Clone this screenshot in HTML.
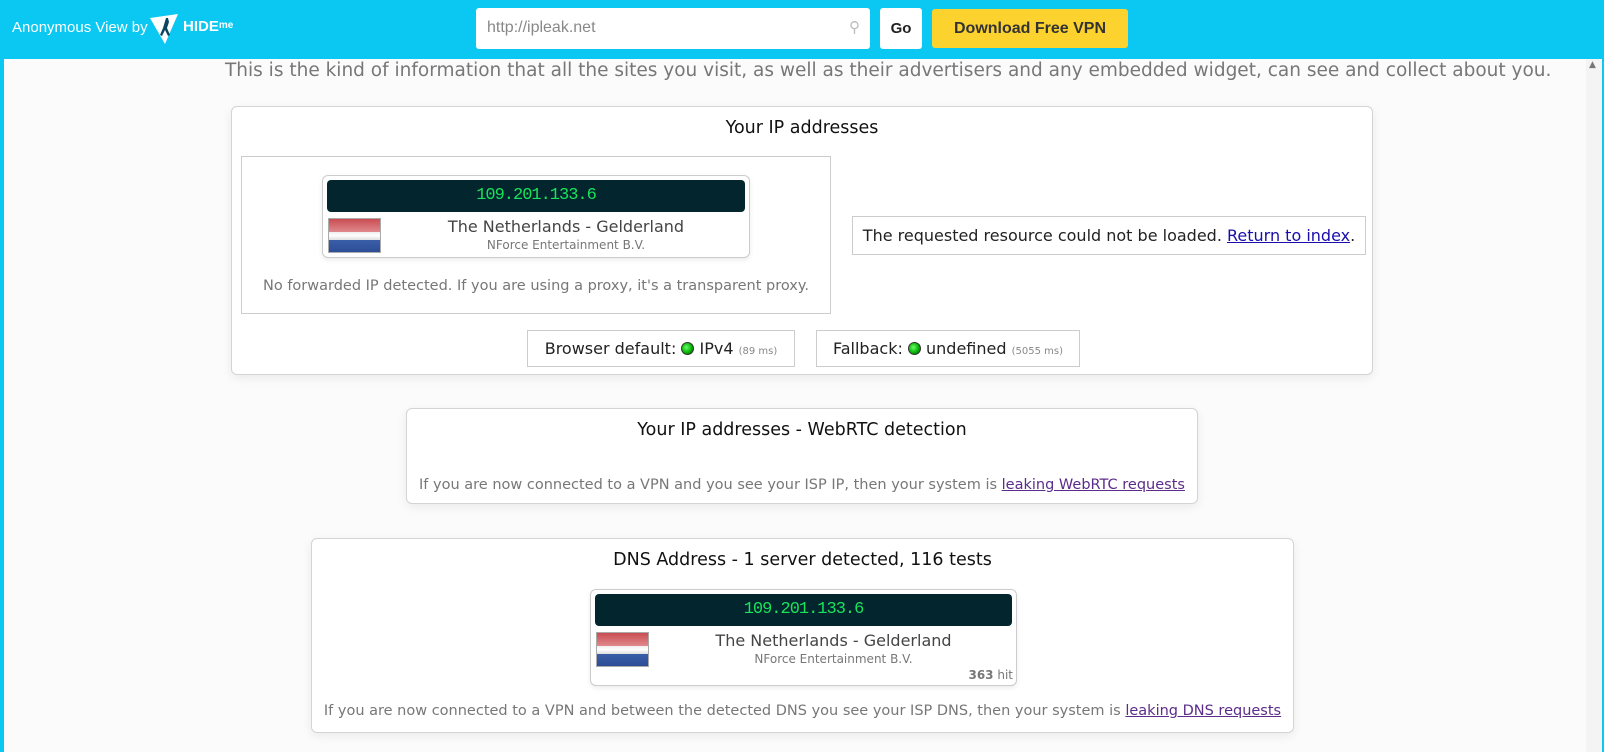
<!DOCTYPE html>
<html><head><style>
*{box-sizing:border-box;margin:0;padding:0}
body{width:1604px;height:752px;overflow:hidden;background:#0bc8f2;font-family:"DejaVu Sans",sans-serif;position:relative}
.abs{position:absolute}
#main{left:4px;top:59px;width:1598px;height:693px;background:#fbfbfb}
.card{position:absolute;background:#fff;border:1px solid #d4d4d4;border-radius:6px;box-shadow:0 3px 10px rgba(0,0,0,.07)}
.t{position:absolute;left:0;right:0;text-align:center;font-size:17.5px;color:#111}
.box{position:absolute;border:1px solid #ccc;background:#fff}
.ipw{position:absolute;border:1px solid #ccc;border-radius:6px;background:#fff;box-shadow:0 2px 5px rgba(0,0,0,.08)}
.ipbar{position:absolute;left:4px;right:4px;top:4px;height:32px;background:#03262e;border-radius:4px;color:#19e35a;font-family:"Liberation Mono",monospace;font-size:17px;text-align:center;line-height:32px;letter-spacing:-1px}
.flag{position:absolute;left:5px;top:42px;width:53px;height:35px;background:linear-gradient(#c94d52,#e08a8d 40%,#eee 38%,#fff 50%,#ddd 64%,#3a5ea8 64%,#2d4e96);border:1px solid #aaa}
.loc{position:absolute;left:60px;right:0;text-align:center;font-size:16px;color:#444}
.isp{position:absolute;left:60px;right:0;text-align:center;font-size:12px;color:#777}
.dot{display:inline-block;width:13px;height:13px;border-radius:50%;background:radial-gradient(circle at 40% 40%,#6f6,#0a0 60%,#050);border:1px solid #333;vertical-align:-1px}
.small{font-size:10px;color:#888}
.g{color:#777;font-size:14.5px}
a{color:#5b2c8a;text-decoration:underline}
</style></head><body>
<div class="abs" style="left:12px;top:19px;color:#fff;font-family:'Liberation Sans',sans-serif;font-size:15px">Anonymous View by</div>
<svg class="abs" style="left:149px;top:13px" width="30" height="32" viewBox="0 0 30 32"><path d="M1 5 L29 1 L16 31 Z" fill="#fff"/><path d="M17 5 l2 0 l1 4 l-2 6 l3 7 l-2 1 l-3-6 l-3 6 l-2-1 l3-7 z" fill="#0b4660"/></svg>
<div class="abs" style="left:183px;top:18px;color:#fff;font-family:'Liberation Sans',sans-serif;font-weight:bold;font-size:15px">HIDE<span style="font-size:10px;vertical-align:3px">me</span></div>
<div class="abs" style="left:476px;top:8px;width:394px;height:41px;background:#fff;border-radius:3px;font-family:'Liberation Sans',sans-serif;font-size:16px;color:#888;padding:11px 11px">http://ipleak.net<span style="position:absolute;right:10px;top:10px;color:#bbb;font-size:15px">&#9906;</span></div>
<div class="abs" style="left:880px;top:8px;width:42px;height:41px;background:#fff;border-radius:3px;font-family:'Liberation Sans',sans-serif;font-weight:bold;font-size:15px;text-align:center;line-height:41px;color:#222">Go</div>
<div class="abs" style="left:932px;top:9px;width:196px;height:39px;background:#fcd22e;border-radius:3px;font-family:'Liberation Sans',sans-serif;font-weight:bold;font-size:16px;text-align:center;line-height:39px;color:#333">Download Free VPN</div>
<div id="main" class="abs"></div>
<div class="abs" style="left:1586px;top:59px;width:16px;height:693px;background:#f4f4f4"></div>
<div class="abs" style="left:1589px;top:60px;color:#777;font-size:9px">&#9650;</div>
<div class="abs" style="left:225px;top:60px;font-size:18.5px;color:#777;white-space:nowrap">This is the kind of information that all the sites you visit, as well as their advertisers and any embedded widget, can see and collect about you.</div>

<div class="card" style="left:231px;top:106px;width:1142px;height:269px">
 <div class="t" style="top:11px">Your IP addresses</div>
 <div class="box" style="left:9px;top:49px;width:590px;height:158px">
  <div class="ipw" style="left:80px;top:18px;width:428px;height:83px">
   <div class="ipbar">109.201.133.6</div><div class="flag"></div>
   <div class="loc" style="top:41px">The Netherlands - Gelderland</div>
   <div class="isp" style="top:62px">NForce Entertainment B.V.</div>
  </div>
  <div class="g" style="position:absolute;left:0;right:0;top:121px;text-align:center">No forwarded IP detected. If you are using a proxy, it's a transparent proxy.</div>
 </div>
 <div class="box" style="left:620px;top:109px;width:514px;height:39px;font-size:16px;color:#222;text-align:center;line-height:37px;white-space:nowrap">The requested resource could not be loaded. <a style="color:#1a0dab">Return to index</a>.</div>
 <div class="box" style="left:295px;top:223px;width:268px;height:37px;font-size:16px;color:#222;text-align:center;line-height:35px;white-space:nowrap">Browser default: <span class="dot"></span> IPv4 <span class="small">(89 ms)</span></div>
 <div class="box" style="left:584px;top:223px;width:264px;height:37px;font-size:16px;color:#222;text-align:center;line-height:35px;white-space:nowrap">Fallback: <span class="dot"></span> undefined <span class="small">(5055 ms)</span></div>
</div>

<div class="card" style="left:406px;top:408px;width:792px;height:96px">
 <div class="t" style="top:11px">Your IP addresses - WebRTC detection</div>
 <div class="g" style="position:absolute;left:0;right:0;top:68px;text-align:center;white-space:nowrap">If you are now connected to a VPN and you see your ISP IP, then your system is <a>leaking WebRTC requests</a></div>
</div>

<div class="card" style="left:311px;top:538px;width:983px;height:195px">
 <div class="t" style="top:11px">DNS Address - 1 server detected, 116 tests</div>
 <div class="ipw" style="left:278px;top:50px;width:427px;height:97px">
  <div class="ipbar">109.201.133.6</div><div class="flag"></div>
  <div class="loc" style="top:41px">The Netherlands - Gelderland</div>
  <div class="isp" style="top:62px">NForce Entertainment B.V.</div>
  <div style="position:absolute;right:3px;top:78px;font-size:12px;color:#777"><b>363</b> hit</div>
 </div>
 <div class="g" style="position:absolute;left:0;right:0;top:164px;text-align:center;white-space:nowrap">If you are now connected to a VPN and between the detected DNS you see your ISP DNS, then your system is <a>leaking DNS requests</a></div>
</div>
</body></html>
